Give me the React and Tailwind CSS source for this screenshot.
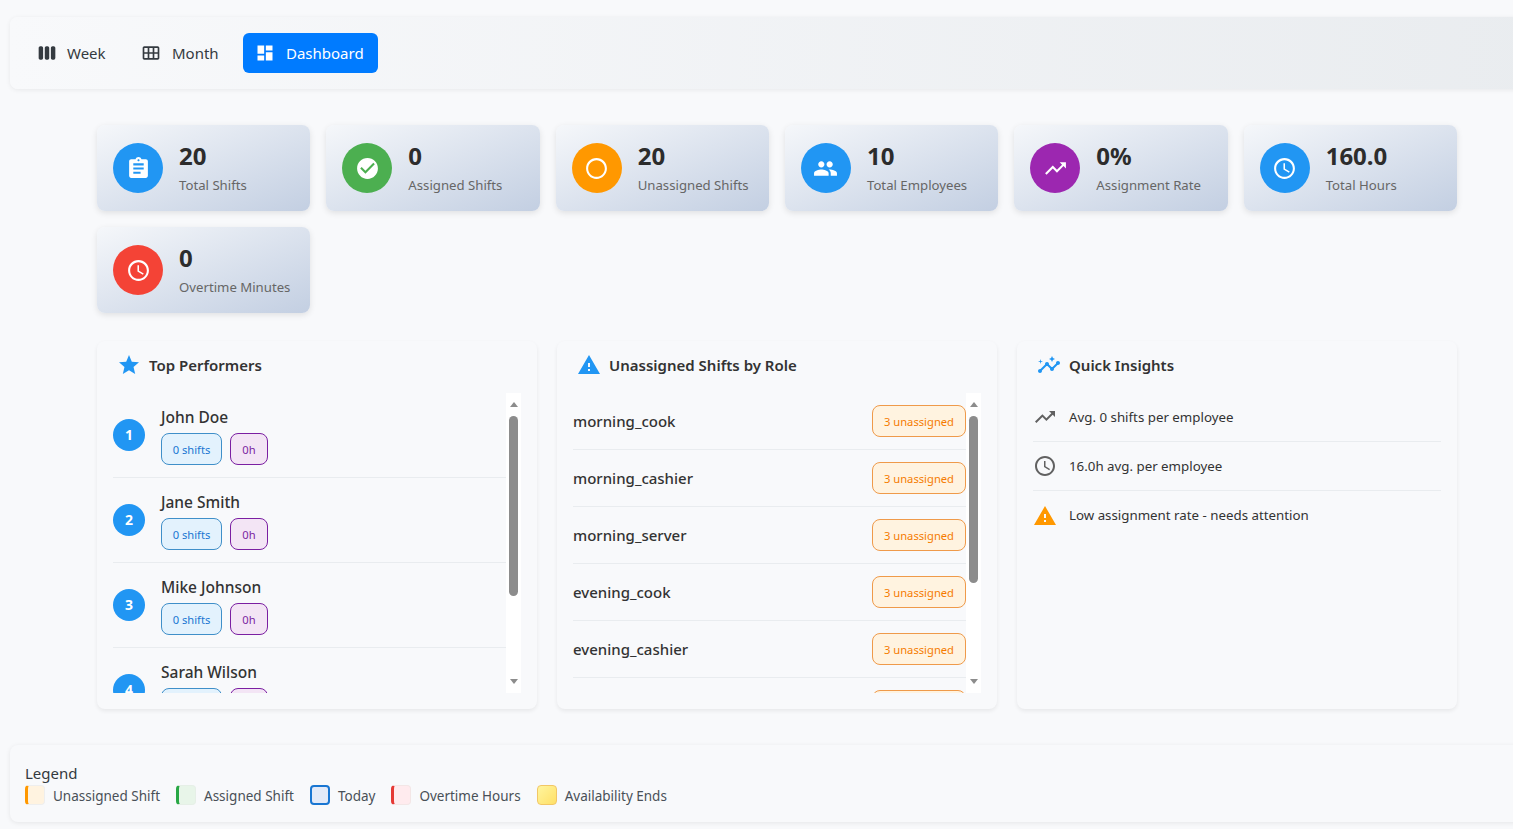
import React from "react";
import {
  MdViewWeek,
  MdCalendarViewMonth,
  MdDashboard,
  MdAssignment,
  MdCheckCircle,
  MdRadioButtonUnchecked,
  MdPeople,
  MdTrendingUp,
  MdAccessTime,
  MdStar,
  MdWarning,
  MdInsights,
} from "react-icons/md";

const stats = [
  { value: "20", label: "Total Shifts", icon: MdAssignment, color: "bg-[#2196f3]" },
  { value: "0", label: "Assigned Shifts", icon: MdCheckCircle, color: "bg-[#4caf50]" },
  { value: "20", label: "Unassigned Shifts", icon: MdRadioButtonUnchecked, color: "bg-[#ff9800]" },
  { value: "10", label: "Total Employees", icon: MdPeople, color: "bg-[#2196f3]" },
  { value: "0%", label: "Assignment Rate", icon: MdTrendingUp, color: "bg-[#9c27b0]" },
  { value: "160.0", label: "Total Hours", icon: MdAccessTime, color: "bg-[#2196f3]" },
  { value: "0", label: "Overtime Minutes", icon: MdAccessTime, color: "bg-[#f44336]" },
];

const performers = ["John Doe", "Jane Smith", "Mike Johnson", "Sarah Wilson"];
const roles = [
  "morning_cook",
  "morning_cashier",
  "morning_server",
  "evening_cook",
  "evening_cashier",
  "evening_server",
];

const insights = [
  { text: "Avg. 0 shifts per employee", icon: MdTrendingUp, color: "text-[#616161]" },
  { text: "16.0h avg. per employee", icon: MdAccessTime, color: "text-[#616161]" },
  { text: "Low assignment rate - needs attention", icon: MdWarning, color: "text-[#ff9800]" },
];

function ViewButton({ icon: Icon, label, active, className }) {
  return (
    <button
      className={`flex h-10 items-center rounded-md text-[15px] ${
        active ? "bg-[#007bff] text-white" : "text-[#343a40]"
      } ${className}`}
    >
      <Icon size={20} />
      <span>{label}</span>
    </button>
  );
}

function Scrollbar({ thumb }) {
  return (
    <div className="flex w-[15px] shrink-0 flex-col items-center bg-white">
      <div className="mt-[9px] h-0 w-0 border-x-[4px] border-b-[5px] border-x-transparent border-b-[#8c8c8c]" />
      <div className={`mt-[9px] w-[9px] rounded-full bg-[#8c8c8c] ${thumb}`} />
      <div className="mt-auto mb-[9px] h-0 w-0 border-x-[4px] border-t-[5px] border-x-transparent border-t-[#8c8c8c]" />
    </div>
  );
}

function Panel({ icon: Icon, title, children }) {
  return (
    <section className="h-[368px] rounded-lg bg-[#f8f9fb] px-4 pt-3 pb-4 shadow-[0_2px_4px_rgba(0,0,0,0.07)]">
      <div className="mb-4 flex h-6 items-center gap-2 px-1">
        <Icon size={24} className="text-[#2196f3]" />
        <h2 className="text-[15px] font-semibold text-[#333]">{title}</h2>
      </div>
      {children}
    </section>
  );
}

export default function App() {
  return (
    <div
      className="h-screen overflow-hidden bg-[#f8f9fb] pt-[17px]"
      style={{ fontFamily: '"Noto Sans", "Open Sans", sans-serif' }}
    >
      <div className="ml-[10px] flex w-[1560px] gap-2 rounded-lg bg-gradient-to-r from-[#f8f9fb] to-[#e9ecef] px-4 py-4 shadow-[0_1px_5px_rgba(0,0,0,0.07)]">
        <ViewButton icon={MdViewWeek} label="Week" className="w-[96px] gap-[10px] pl-[11px]" />
        <ViewButton icon={MdCalendarViewMonth} label="Month" className="w-[105px] gap-[11px] pl-[11px]" />
        <ViewButton icon={MdDashboard} label="Dashboard" active className="w-[135px] gap-[11px] pl-[12px]" />
      </div>

      <main className="pt-[36px] pr-[56px] pl-[97px]">
        <div className="grid grid-cols-6 gap-4">
          {stats.map((stat) => (
            <div
              key={stat.label}
              className="flex h-[86px] items-center gap-4 rounded-lg bg-gradient-to-br from-[#f5f7fa] to-[#c3cfe2] px-4 shadow-[0_2px_6px_rgba(0,0,0,0.1)]"
            >
              <div className={`flex h-[50px] w-[50px] shrink-0 items-center justify-center rounded-full text-white ${stat.color}`}>
                <stat.icon size={25} />
              </div>
              <div>
                <div className="text-[24px] leading-8 font-bold text-[#2c2c2c]">{stat.value}</div>
                <div className="pt-[2px] text-[13.2px] leading-[22px] text-[#666]">{stat.label}</div>
              </div>
            </div>
          ))}
        </div>

        <div className="mt-7 grid grid-cols-3 gap-5">
          <Panel icon={MdStar} title="Top Performers">
            <div className="flex h-[300px] overflow-hidden">
              <div className="min-w-0 flex-1">
                {performers.map((name, index) => (
                  <div key={name} className="flex h-[85px] items-center gap-4 border-b border-[#e9ecef]">
                    <div className="flex h-8 w-8 items-center justify-center rounded-full bg-[#2196f3] pb-[2px] text-[14px] font-bold text-white">
                      {index + 1}
                    </div>
                    <div>
                      <div className="mb-1 text-[15.5px] leading-6 font-medium text-[#333]">{name}</div>
                      <div className="flex gap-2">
                        <span className="flex h-8 w-[61px] items-center justify-center rounded-lg border border-[#3f8fc9] bg-[#e3f2fd] pt-[3px] text-[11.2px] text-[#1976d2]">
                          0 shifts
                        </span>
                        <span className="flex h-8 w-[38px] items-center justify-center rounded-lg border border-[#7b1fa2] bg-[#f3e5f5] pt-[3px] text-[11.2px] text-[#7b1fa2]">
                          0h
                        </span>
                      </div>
                    </div>
                  </div>
                ))}
              </div>
              <Scrollbar thumb="h-[180px]" />
            </div>
          </Panel>

          <Panel icon={MdWarning} title="Unassigned Shifts by Role">
            <div className="flex h-[300px] overflow-hidden">
              <div className="min-w-0 flex-1">
                {roles.map((role) => (
                  <div key={role} className="flex h-[57px] shrink-0 items-center justify-between border-b border-[#e9ecef]">
                    <span className="text-[15px] font-medium text-[#333]">{role}</span>
                    <span className="flex h-8 w-[94px] items-center justify-center rounded-lg border border-[#ef9a4a] bg-[#fff3e0] pt-[3px] text-[11.2px] text-[#f57c00]">
                      3 unassigned
                    </span>
                  </div>
                ))}
              </div>
              <Scrollbar thumb="h-[167px]" />
            </div>
          </Panel>

          <Panel icon={MdInsights} title="Quick Insights">
            <div>
              {insights.map((item, index) => (
                <div
                  key={item.text}
                  className={`flex h-[49px] items-center ${index < 2 ? "border-b border-[#e9ecef]" : ""}`}
                >
                  <div className="w-9 shrink-0">
                    <item.icon size={24} className={item.color} />
                  </div>
                  <span className="pt-px text-[13.3px] text-[#333]">{item.text}</span>
                </div>
              ))}
            </div>
          </Panel>
        </div>
      </main>

      <footer className="mt-9 ml-[10px] w-[1560px] rounded-lg bg-[#f8f9fb] px-[15px] pt-4 pb-4 shadow-[0_1px_5px_rgba(0,0,0,0.08)]">
        <div className="text-[15px] leading-6 text-[#343a40]">Legend</div>
        <div className="flex gap-4 text-[13.5px] leading-5 text-[#495057]">
          <div className="flex items-start gap-2">
            <span className="h-5 w-5 rounded-[4px] border border-[#eee] border-l-[3px] border-l-[#ff9800] bg-[#fff3e0]" />
            <span className="pt-px">Unassigned Shift</span>
          </div>
          <div className="flex items-start gap-2">
            <span className="h-5 w-5 rounded-[4px] border border-[#e6efe7] border-l-[3px] border-l-[#28a745] bg-[#e8f5e9]" />
            <span className="pt-px">Assigned Shift</span>
          </div>
          <div className="flex items-start gap-2">
            <span className="h-5 w-5 rounded-[4px] border-2 border-[#1976d2] bg-[#e3eaf8]" />
            <span className="pt-px">Today</span>
          </div>
          <div className="flex items-start gap-2">
            <span className="h-5 w-5 rounded-[4px] border border-[#f3e6e6] border-l-[3px] border-l-[#e53935] bg-[#ffebee]" />
            <span className="pt-px">Overtime Hours</span>
          </div>
          <div className="flex items-start gap-2">
            <span className="h-5 w-5 rounded-[4px] border border-[#f2c766] bg-gradient-to-br from-[#fff59d] to-[#ffe066]" />
            <span className="pt-px">Availability Ends</span>
          </div>
        </div>
      </footer>
    </div>
  );
}
